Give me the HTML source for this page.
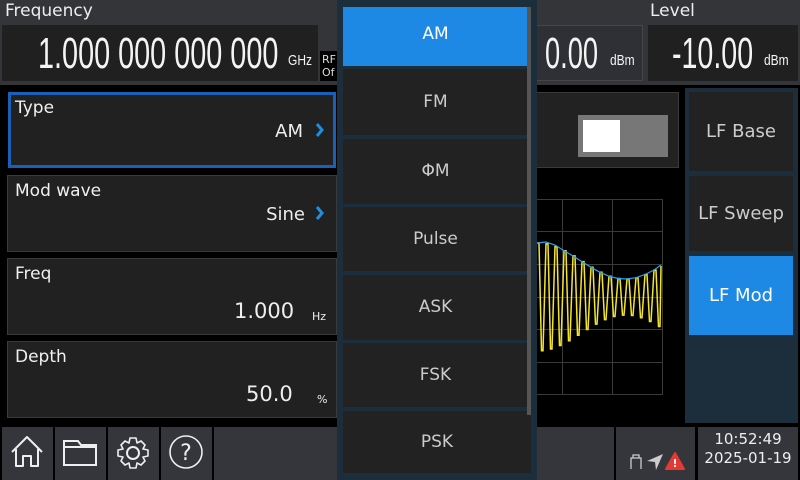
<!DOCTYPE html>
<html><head><meta charset="utf-8"><style>
*{margin:0;padding:0;box-sizing:border-box}
body{width:800px;height:480px;overflow:hidden;background:#000;font-family:"DejaVu Sans","Liberation Sans",sans-serif;color:#eee;position:relative}
.a{position:absolute}
.top{left:0;top:0;width:800px;height:85px;background:#343539}
.lbl{font-size:17px;color:#eee}
.num{font-family:"Liberation Sans",sans-serif;transform-origin:left top;white-space:nowrap;color:#f4f4f4}
.panel{background:#212121;border:1px solid #3a3a3a}
.plab{font-size:17px;left:7px;top:5px;color:#f0f0f0}
.dd{background:#1c2e3c}
.item{left:343px;width:185px;background:#222;color:#ccc;font-size:17px;text-align:center}
.rb{background:#222;color:#ccc;font-size:18px;text-align:center;left:689px;width:104px}
.bb{background:#35363b;top:427px;height:53px}
</style></head><body>
<div class="a top"></div>
<div class="a lbl" style="left:5px;top:1px">Frequency</div>
<div class="a" style="left:2px;top:25px;width:316px;height:56px;background:#202020"></div>
<div class="a num" style="left:38px;top:29px;font-size:44px;transform:scaleX(0.655)">1.000 000 000 000</div>
<div class="a num" style="left:288px;top:52px;font-size:15px;transform:scaleX(0.8)">GHz</div>
<div class="a" style="left:320px;top:51px;width:20px;height:30px;background:#000;font-size:11px;line-height:13px;padding:2px 0 0 2px;color:#ddd">RF<br>Of</div>
<div class="a" style="left:536px;top:25px;width:107px;height:56px;background:#2f3035;border:1px solid #45464b"></div>
<div class="a num" style="left:545px;top:29px;font-size:44px;transform:scaleX(0.62)">0.00</div>
<div class="a num" style="left:610px;top:52px;font-size:15px;transform:scaleX(0.8)">dBm</div>
<div class="a lbl" style="left:650px;top:1px">Level</div>
<div class="a" style="left:648px;top:25px;width:150px;height:56px;background:#202020"></div>
<div class="a num" style="left:672px;top:29px;font-size:44px;transform:scaleX(0.65)">-10.00</div>
<div class="a num" style="left:764px;top:52px;font-size:15px;transform:scaleX(0.8)">dBm</div>

<div class="a panel" style="left:8px;top:92px;width:328px;height:76px;border:3px solid #1a5fb8">
 <div class="a plab" style="left:4px;top:3px">Type</div>
 <div class="a" style="right:30px;top:26px;font-size:18px">AM</div>
</div>
<div class="a panel" style="left:7px;top:175px;width:330px;height:77px">
 <div class="a plab">Mod wave</div>
 <div class="a" style="right:31px;top:28px;font-size:18px">Sine</div>
</div>
<svg class="a" style="left:0;top:0" width="340" height="260" fill="none" stroke="#1e8fe0" stroke-width="3">
<path d="M317 124 L322 130 L317 136"/>
<path d="M317 207 L322 213 L317 219"/>
</svg>
<div class="a panel" style="left:7px;top:258px;width:330px;height:77px">
 <div class="a plab">Freq</div>
 <div class="a" style="left:226px;top:40px;font-size:21px">1.000</div>
 <div class="a" style="left:304px;top:51px;font-size:11px">Hz</div>
</div>
<div class="a panel" style="left:7px;top:341px;width:330px;height:77px">
 <div class="a plab">Depth</div>
 <div class="a" style="left:238px;top:40px;font-size:21px">50.0</div>
 <div class="a" style="left:309px;top:51px;font-size:11px">%</div>
</div>

<div class="a" style="left:536px;top:92px;width:143px;height:76px;background:#222;border:1px solid #3a3a3a"></div>
<div class="a" style="left:578px;top:115px;width:90px;height:42px;background:#777"></div>
<div class="a" style="left:583px;top:120px;width:37px;height:32px;background:#fff"></div>

<svg class="a" style="left:0;top:0" width="800" height="480">
<g stroke="#3a3a3a" stroke-width="1" fill="none">
<path d="M536 199.5H662.5M536 231.5H662.5M536 264.5H662.5M536 297.5H662.5M536 329.5H662.5M536 362.5H662.5M536 394.5H662.5M562.5 199V395M612.5 199V395M662.5 199V395"/>
</g>
<polyline fill="none" stroke="#f5e52a" stroke-width="1.5" points="537,243 539,243 541.5,350.8 543,350.8 546,243.9 548,243.9 550.5,349 552,349 555,246.6 557,246.6 559.5,345.5 561,345.5 564,250.7 566,250.7 568.5,340.8 570,340.8 573,255.9 575,255.9 577.5,335.2 579,335.2 582,261.6 584,261.6 586.5,329.5 588,329.5 591,267.3 593,267.3 595.5,324.1 597,324.1 600,272.3 602,272.3 604.5,319.6 606,319.6 609,276.2 611,276.2 613.5,316.5 615,316.5 618,278.5 620,278.5 622.5,315.1 624,315.1 627,279 629,279 631.5,315.5 633,315.5 636,277.7 638,277.7 640.5,317.7 642,317.7 645,274.5 647,274.5 649.5,321.5 651,321.5 654,270.1 656,270.1 658.5,326.5 660,326.5 661,266"/>
<polyline fill="none" stroke="#2aa0ee" stroke-width="1.2" points="537,243 546,242 555,245 564,250.7 573,256 582,261.6 591,267.3 600,272.3 609,276.2 618,278.5 627,279 636,277.7 645,274.5 654,270 661,265"/>
</svg>

<div class="a" style="left:685px;top:88px;width:113px;height:335px;background:#1c2e3c"></div>
<div class="a rb" style="top:92px;height:79px;line-height:79px">LF Base</div>
<div class="a rb" style="top:176px;height:75px;line-height:75px">LF Sweep</div>
<div class="a rb" style="top:256px;height:79px;line-height:79px;background:#1e88e5;color:#fff">LF Mod</div>

<div class="a bb" style="left:2px;width:51px"></div>
<div class="a bb" style="left:55px;width:51px"></div>
<div class="a bb" style="left:108px;width:51px"></div>
<div class="a bb" style="left:161px;width:51px"></div>
<div class="a bb" style="left:214px;width:400px"></div>
<div class="a bb" style="left:616px;width:79px"></div>
<div class="a bb" style="left:698px;width:100px"></div>
<svg class="a" style="left:0;top:425px" width="800" height="55" fill="none" stroke="#eee" stroke-width="2">
<path d="M12 27 L27 12 L42 27 M16 24 V41 H23 V31 H31 V41 H38 V24" stroke-linejoin="round"/>
<path d="M64 16 H78 L81 20 H96 V40 H64 Z M64 22 H96"/>
<g transform="translate(133 28)"><circle r="6"/><path d="M-3 -15 H3 L4 -10 L8 -12 L12 -8 L10 -4 L15 -3 V3 L10 4 L12 8 L8 12 L4 10 L3 15 H-3 L-4 10 L-8 12 L-12 8 L-10 4 L-15 3 V-3 L-10 -4 L-12 -8 L-8 -12 L-4 -10 Z" stroke-width="1.6" stroke-linejoin="round"/></g>
<circle cx="186" cy="27" r="16" stroke-width="1.6"/>
<text x="186" y="35" font-size="22" fill="#eee" stroke="none" text-anchor="middle" font-family="DejaVu Sans">?</text>
<path d="M631 44 V33 H641 V44 M633 33 V30 H639 V33" stroke="#ccc" stroke-width="1.3"/>
<path d="M647 36 L663 29 L656 45 L655 37 Z" fill="#ccc" stroke="none"/>
<path d="M675 28 L684 44 H666 Z" fill="#e53935" stroke="#e53935" stroke-linejoin="round"/>
<text x="675" y="42" font-size="11" font-weight="bold" fill="#fff" stroke="none" text-anchor="middle">!</text>
</svg>
<div class="a" style="left:698px;top:430px;width:100px;text-align:center;font-size:15px;line-height:19px;color:#eee">10:52:49<br>2025-01-19</div>

<div class="a dd" style="left:337px;top:0;width:200px;height:480px"></div>
<div class="a item" style="top:7px;height:59px;line-height:55px;background:#1e88e5;color:#fff">AM</div>
<div class="a item" style="top:69px;height:66px;line-height:66px">FM</div>
<div class="a item" style="top:139px;height:65px;line-height:65px">ΦM</div>
<div class="a item" style="top:207px;height:64px;line-height:64px">Pulse</div>
<div class="a item" style="top:275px;height:65px;line-height:65px">ASK</div>
<div class="a item" style="top:343px;height:64px;line-height:64px">FSK</div>
<div class="a item" style="top:411px;height:62px;line-height:62px;width:188px">PSK</div>
<div class="a" style="left:527px;top:7px;width:4px;height:408px;background:#555"></div>
</body></html>
